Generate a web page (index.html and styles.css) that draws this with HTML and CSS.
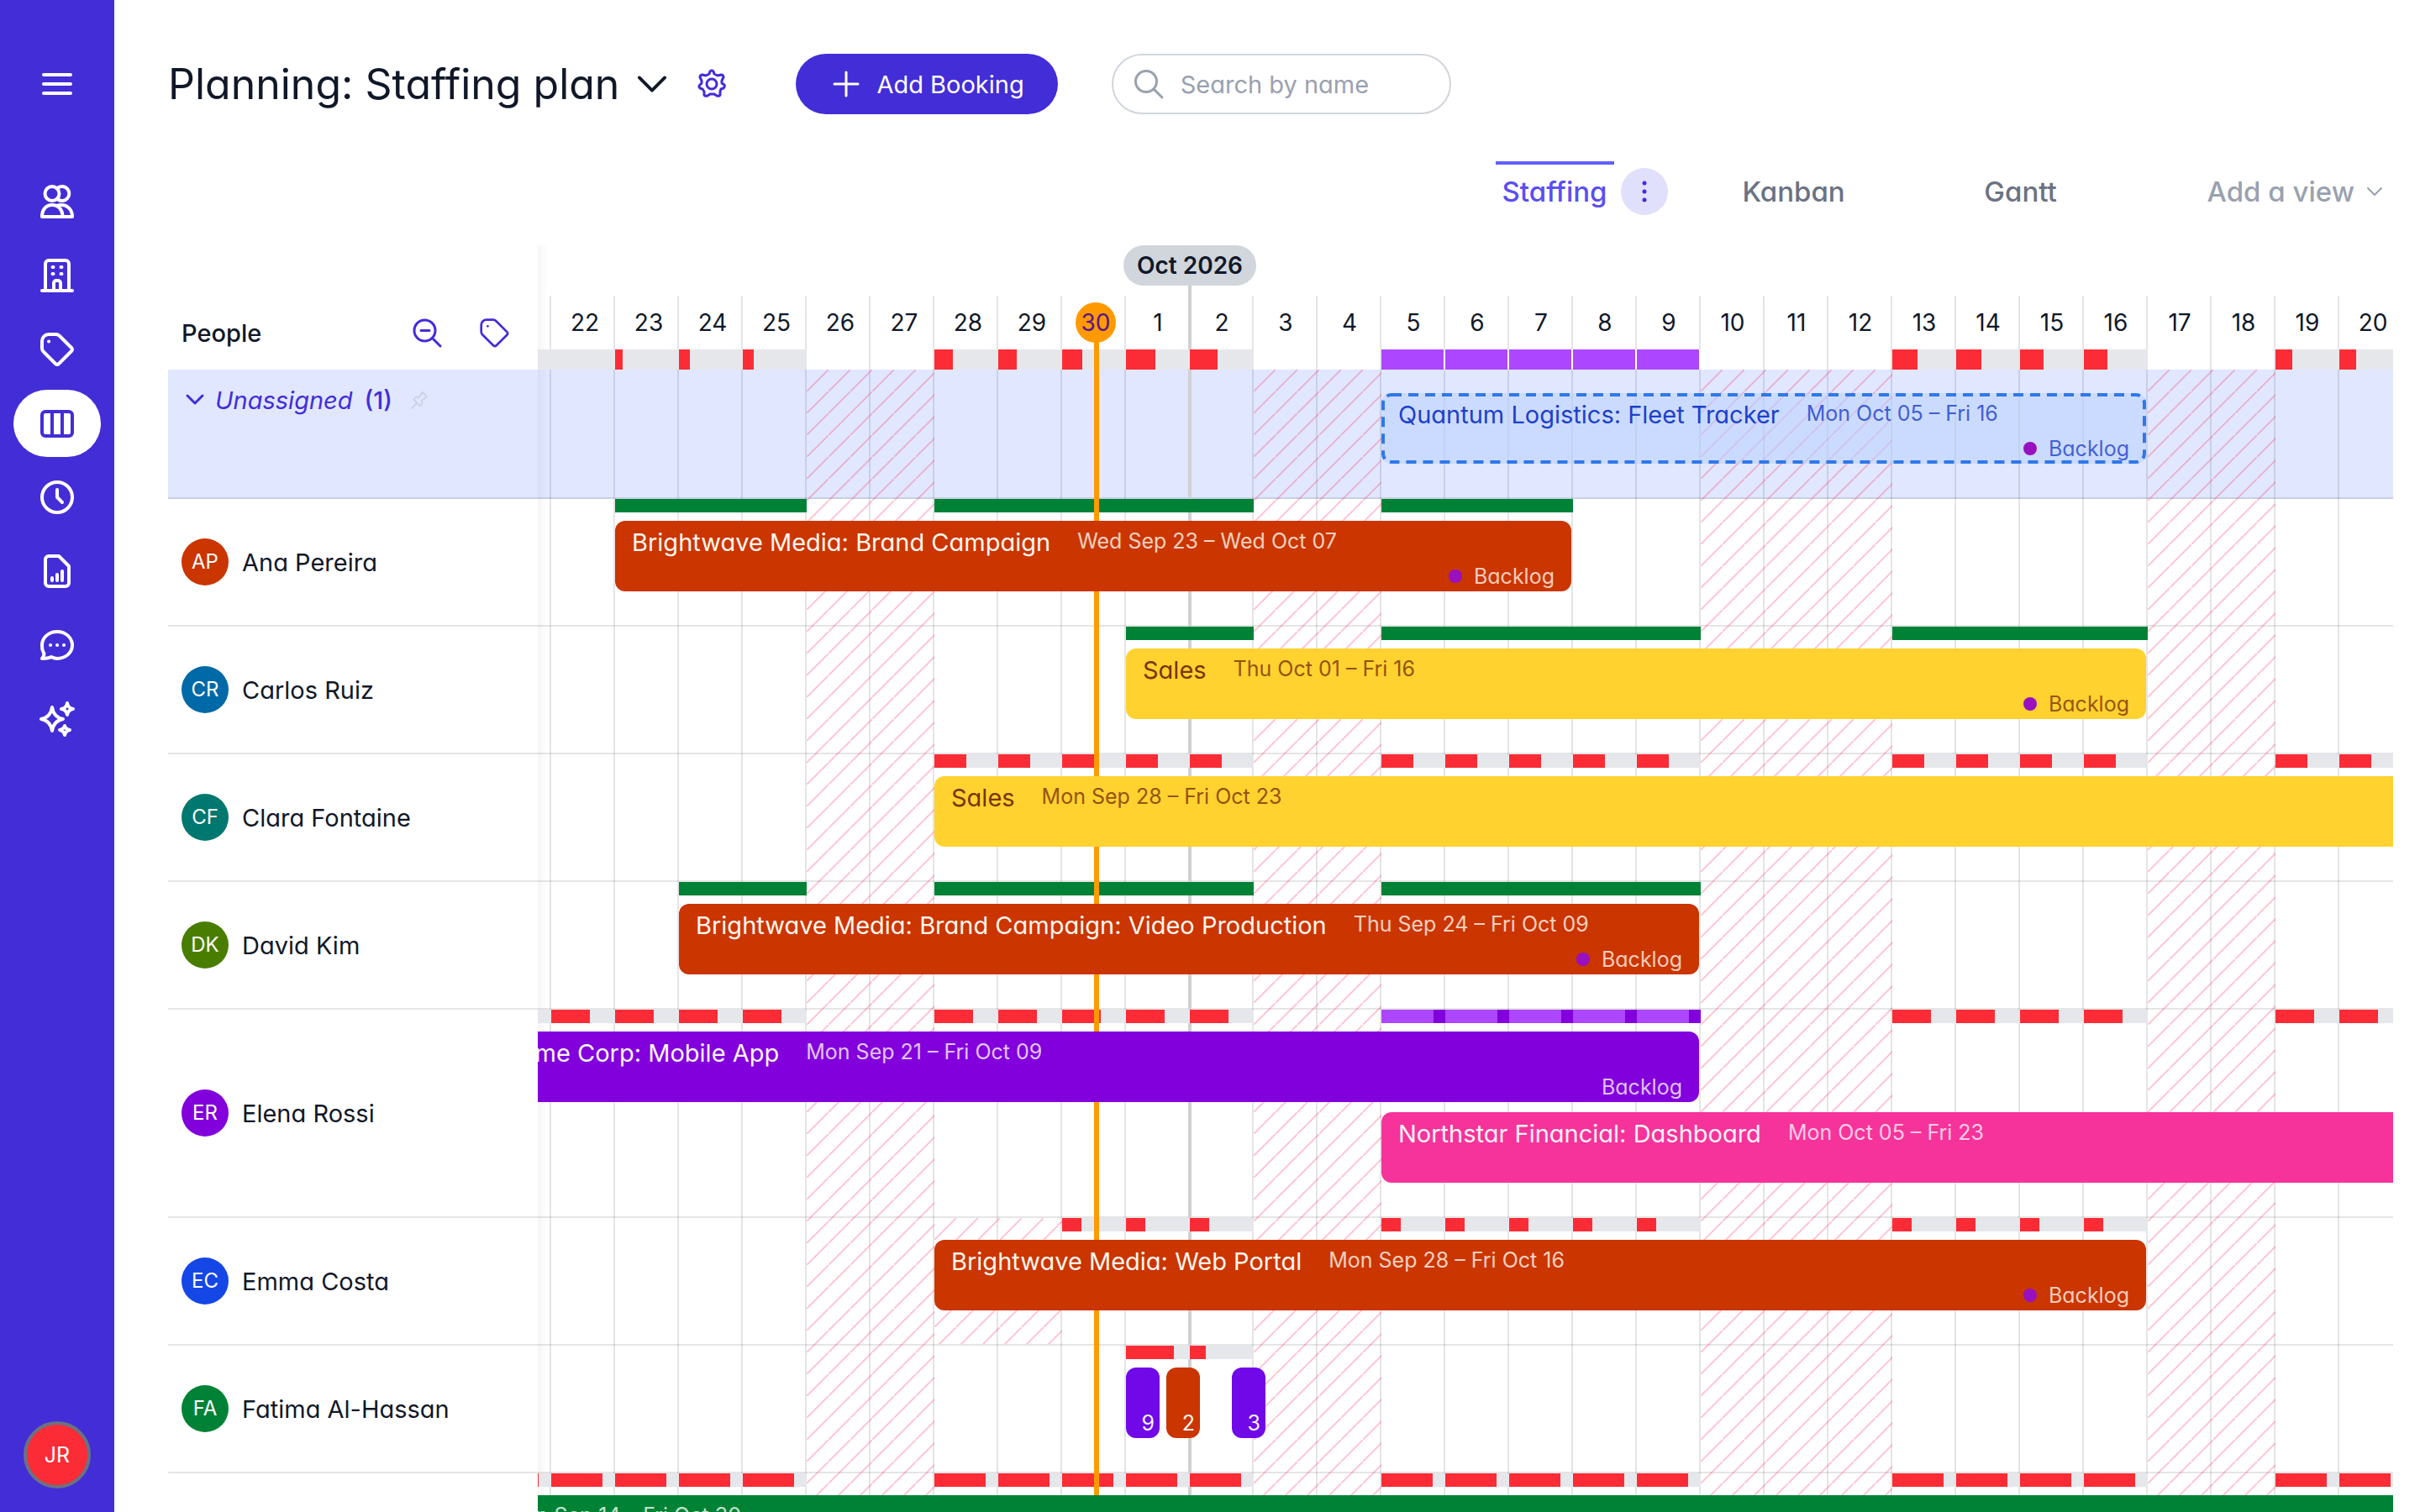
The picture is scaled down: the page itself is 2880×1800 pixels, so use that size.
FILE: index.html
```html
<!DOCTYPE html>
<html lang="en">
<head>
<meta charset="utf-8">
<title>Planning: Staffing plan</title>
<link rel="stylesheet" href="styles.css">
</head>
<body>
<div class="app">
  <nav class="sidebar" aria-label="Main">
    <button class="sidebar__item sidebar__menu" aria-label="Menu"><svg class="icon icon--nav" viewBox="0 0 40 40"><path d="M4 9h32M4 20h32M4 31h32"/></svg></button>
    <a class="sidebar__item" href="#people" aria-label="People"><svg class="icon icon--nav" viewBox="0 0 40 40"><circle cx="14" cy="10.500" r="8.500"/><path d="M21 3.500a8.500 8.500 0 1 1 0 14"/><path d="M2 38c0-9 5-14 12-14s12.500 5 12.500 14z"/><path d="M21 24.500c10-2 17 4 17 13.500H26"/></svg></a>
    <a class="sidebar__item" href="#clients" aria-label="Clients"><svg class="icon icon--nav" viewBox="0 0 40 40"><path d="M2 38h36M6 38V6a4 4 0 0 1 4-4h20a4 4 0 0 1 4 4v32M16 38V29a3 3 0 0 1 3-3h2a3 3 0 0 1 3 3v9"/><path d="M14.500 10h1M24.500 10h1M14.500 18h1M24.500 18h1"/></svg></a>
    <a class="sidebar__item" href="#projects" aria-label="Projects"><svg class="icon icon--nav" viewBox="0 0 40 40"><path d="M2 10a8 8 0 0 1 8-8h9a6 6 0 0 1 4 2l14 14q2 2 0 4L22 37q-2 2-4 0L4 23a6 6 0 0 1-2-4z"/><path d="M10 10.500h.1"/></svg></a>
    <a class="sidebar__item sidebar__item--active" href="#planning" aria-label="Planning" aria-current="page"><svg class="icon icon--nav" viewBox="0 0 40 40"><rect x="2" y="6" width="36" height="29" rx="4"/><path d="M14 6v29M26 6v29"/></svg></a>
    <a class="sidebar__item" href="#time" aria-label="Time"><svg class="icon icon--nav" viewBox="0 0 40 40"><circle cx="20" cy="20" r="18"/><path d="M20 11v9l6 6"/></svg></a>
    <a class="sidebar__item" href="#reports" aria-label="Reports"><svg class="icon icon--nav" viewBox="0 0 40 40"><path d="M6 6a4 4 0 0 1 4-4h12l12 12v20a4 4 0 0 1-4 4H10a4 4 0 0 1-4-4z"/><path d="M14 28v3M20 24v7M26 20v11"/></svg></a>
    <a class="sidebar__item" href="#messages" aria-label="Messages"><svg class="icon icon--nav" viewBox="0 0 40 40"><path d="M20 4c10 0 18 7 18 16s-8 16-18 16c-3 0-5-1-7-2-4 2-7 2-11 2 3-3 3-6 1-9-1-2-1-4-1-7C2 11 10 4 20 4z"/><path d="M12 20h.1M20 20h.1M28 20h.1"/></svg></a>
    <a class="sidebar__item" href="#assistant" aria-label="Assistant"><svg class="icon icon--nav" viewBox="0 0 40 40"><path d="M14 6q2 12 13 14-11 2-13 14-2-12-13-14 11-2 13-14zM32 1q1 6 7 7-6 1-7 7-1-6-7-7 6-1 7-7zM29 28q1 4 6 5-5 1-6 6-1-5-6-6 5-1 6-5z"/></svg></a>
    <button class="sidebar__avatar" aria-label="Account JR">JR</button>
  </nav>

  <main class="main">
    <header class="topbar">
      <h1 class="topbar__title">Planning: Staffing plan</h1>
      <button class="plain topbar__switch" aria-label="Switch plan"><svg class="icon icon--chevron" viewBox="0 0 36 20"><path d="M2 2l16 16L34 2"/></svg></button>
      <button class="plain topbar__settings" aria-label="Settings"><svg class="icon icon--gear" viewBox="0 0 36 36"><circle cx="18" cy="18" r="6"/><path d="M15 6l1-3q2-2 4 0l1 3 4 2 4-1q3 0 3 3l-2 4v3l3 2q1 2-1 4l-3 1-1 3v4q-1 2-4 1l-3-2h-5l-3 2q-3 1-4-1v-4l-2-3-3-1q-2-2 0-4l2-2v-3l-2-4q0-3 3-3l4 1z"/></svg></button>
      <button class="add"><svg class="icon icon--plus" viewBox="0 0 32 32"><path d="M16 2v28M2 16h28"/></svg>Add Booking</button>
      <label class="search"><svg class="icon icon--search" viewBox="0 0 36 36"><circle cx="15" cy="15" r="12.500"/><path d="M24 24l10 10"/></svg><input class="search__input" type="search" placeholder="Search by name" aria-label="Search by name"></label>
    </header>

    <nav class="tabs" aria-label="Views">
      <a class="tabs__item tabs__item--active" href="#staffing">Staffing</a>
      <button class="plain tabs__more" aria-label="View options"><svg class="icon icon--dots" viewBox="0 0 8 28"><circle cx="4" cy="4" r="2.500"/><circle cx="4" cy="14" r="2.500"/><circle cx="4" cy="24" r="2.500"/></svg></button>
      <a class="tabs__item tabs__item--kanban" href="#kanban">Kanban</a>
      <a class="tabs__item tabs__item--gantt" href="#gantt">Gantt</a>
      <button class="plain tabs__add">Add a view <svg class="icon icon--small-chevron" viewBox="0 0 20 12"><path d="M2 2l8 8 8-8"/></svg></button>
    </nav>

    <section class="plan" aria-label="Staffing plan">
      <div class="plan__head">
        <div class="people-head">
          <span class="people-head__label">People</span>
          <button class="plain" aria-label="Zoom out"><svg class="icon icon--tool" viewBox="0 0 36 36"><circle cx="15.500" cy="15.500" r="12.500"/><path d="M25 25l9 9M11 15.500h10"/></svg></button>
          <button class="plain" aria-label="Filter by tag"><svg class="icon icon--tool" viewBox="0 0 40 40"><path d="M3 10a7 7 0 0 1 7-7h9a6 6 0 0 1 4 2l14 14q2 2 0 4L23 37q-2 2-4 0L5 23a6 6 0 0 1-2-4z"/><path d="M11.500 11.500h.1"/></svg></button>
        </div>
        <div class="dates">
          <div class="months days-grid"><span class="months__pill">Oct 2026</span></div>
          <div class="days days-grid">
            <span class="day day--twenties" style="grid-column:9">22</span><span class="day day--twenties">23</span><span class="day day--twenties">24</span><span class="day day--twenties">25</span><span class="day day--twenties">26</span><span class="day day--twenties">27</span><span class="day day--twenties">28</span><span class="day day--twenties">29</span><span class="day day--twenties"><span class="day__dot">30</span></span><span class="day">1</span><span class="day">2</span><span class="day">3</span><span class="day">4</span><span class="day">5</span><span class="day">6</span><span class="day">7</span><span class="day">8</span><span class="day">9</span><span class="day">10</span><span class="day">11</span><span class="day">12</span><span class="day">13</span><span class="day">14</span><span class="day">15</span><span class="day">16</span><span class="day">17</span><span class="day">18</span><span class="day">19</span><span class="day day--twenties">20</span>
          </div>
          <div class="totals days-grid">
            <i class="load load--part" style="grid-column:8/10;--used:0px"></i>
            <i class="load load--part" style="grid-column:10;--used:9px"></i>
            <i class="load load--part" style="grid-column:11/13;--used:13px"></i>
            <i class="load load--part" style="grid-column:15/17;--used:22px"></i>
            <i class="load load--part" style="grid-column:17;--used:24px"></i>
            <i class="load load--part" style="grid-column:18;--used:35px"></i>
            <i class="load load--part" style="grid-column:19;--used:33px"></i>
            <i class="load load--over" style="grid-column:22/27"></i>
            <i class="load load--part" style="grid-column:30/32;--used:30px"></i>
            <i class="load load--part" style="grid-column:32/34;--used:28px"></i>
            <i class="load load--part" style="grid-column:36/38;--used:20px"></i>
          </div>
        </div>
      </div>

      <div class="row row--unassigned">
        <div class="person person--group">
          <button class="plain group"><svg class="icon icon--group" viewBox="0 0 20 12"><path d="M1 1l9 9 9-9"/></svg><em class="group__name">Unassigned</em> <span class="group__count">(1)</span></button>
          <button class="plain" aria-label="Pin group"><svg class="icon icon--pin" viewBox="0 0 24 24"><path d="M1 23l7-7M4 12l8 8c3-2 3-5 2-7l7-5-6-6-5 7c-2-1-5-1-6 3z"/></svg></button>
        </div>
        <div class="track days-grid">
          <button class="booking booking--open" style="grid-column:22/34"><svg class="booking__outline" aria-hidden="true"><rect width="100%" height="100%" rx="12"/></svg><span class="booking__top"><span class="booking__name">Quantum Logistics: Fleet Tracker</span><span class="booking__dates">Mon Oct 05 – Fri 16</span></span><span class="booking__status booking__status--dot">Backlog</span></button>
        </div>
      </div>

      <div class="row">
        <div class="person"><span class="avatar avatar--orange">AP</span><span>Ana Pereira</span></div>
        <div class="track days-grid">
          <i class="load load--full" style="grid-column:10/13"></i>
          <i class="load load--full" style="grid-column:15/20"></i>
          <i class="load load--full" style="grid-column:22/25"></i>
          <button class="booking booking--orange" style="grid-column:10/25"><span class="booking__top"><span class="booking__name">Brightwave Media: Brand Campaign</span><span class="booking__dates">Wed Sep 23 – Wed Oct 07</span></span><span class="booking__status booking__status--dot">Backlog</span></button>
        </div>
      </div>

      <div class="row">
        <div class="person"><span class="avatar avatar--blue">CR</span><span>Carlos Ruiz</span></div>
        <div class="track days-grid">
          <i class="load load--full" style="grid-column:18/20"></i>
          <i class="load load--full" style="grid-column:22/27"></i>
          <i class="load load--full" style="grid-column:30/34"></i>
          <button class="booking booking--yellow" style="grid-column:18/34"><span class="booking__top"><span class="booking__name">Sales</span><span class="booking__dates">Thu Oct 01 – Fri 16</span></span><span class="booking__status booking__status--dot">Backlog</span></button>
        </div>
      </div>

      <div class="row">
        <div class="person"><span class="avatar avatar--teal">CF</span><span>Clara Fontaine</span></div>
        <div class="track days-grid">
          <i class="load load--part" style="grid-column:15/20;--used:38px"></i>
          <i class="load load--part" style="grid-column:22/27;--used:38px"></i>
          <i class="load load--part" style="grid-column:30/34;--used:38px"></i>
          <i class="load load--part" style="grid-column:36/41;--used:38px"></i>
          <button class="booking booking--yellow" style="grid-column:15/41"><span class="booking__top"><span class="booking__name">Sales</span><span class="booking__dates">Mon Sep 28 – Fri Oct 23</span></span></button>
        </div>
      </div>

      <div class="row">
        <div class="person"><span class="avatar avatar--lime">DK</span><span>David Kim</span></div>
        <div class="track days-grid">
          <i class="load load--full" style="grid-column:11/13"></i>
          <i class="load load--full" style="grid-column:15/20"></i>
          <i class="load load--full" style="grid-column:22/27"></i>
          <button class="booking booking--orange" style="grid-column:11/27"><span class="booking__top"><span class="booking__name">Brightwave Media: Brand Campaign: Video Production</span><span class="booking__dates">Thu Sep 24 – Fri Oct 09</span></span><span class="booking__status booking__status--dot">Backlog</span></button>
        </div>
      </div>

      <div class="row">
        <div class="person"><span class="avatar avatar--purple">ER</span><span>Elena Rossi</span></div>
        <div class="track days-grid">
          <i class="load load--part" style="grid-column:8/13;--used:46px"></i>
          <i class="load load--part" style="grid-column:15/20;--used:46px"></i>
          <i class="load load--excess" style="grid-column:22/27;--used:62px"></i>
          <i class="load load--part" style="grid-column:30/34;--used:46px"></i>
          <i class="load load--part" style="grid-column:36/41;--used:46px"></i>
          <button class="booking booking--purple" style="grid-column:8/27"><span class="booking__top"><span class="booking__name">Acme Corp: Mobile App</span><span class="booking__dates">Mon Sep 21 – Fri Oct 09</span></span><span class="booking__status">Backlog</span></button>
          <button class="booking booking--pink booking--second" style="grid-column:22/41"><span class="booking__top"><span class="booking__name">Northstar Financial: Dashboard</span><span class="booking__dates">Mon Oct 05 – Fri 23</span></span></button>
        </div>
      </div>

      <div class="row">
        <div class="person"><span class="avatar avatar--royal">EC</span><span>Emma Costa</span></div>
        <div class="track days-grid">
          <i class="leave" style="grid-column:15/17"></i>
          <i class="load load--part" style="grid-column:17/20;--used:23px"></i>
          <i class="load load--part" style="grid-column:22/27;--used:23px"></i>
          <i class="load load--part" style="grid-column:30/34;--used:23px"></i>
          <button class="booking booking--orange" style="grid-column:15/34"><span class="booking__top"><span class="booking__name">Brightwave Media: Web Portal</span><span class="booking__dates">Mon Sep 28 – Fri Oct 16</span></span><span class="booking__status booking__status--dot">Backlog</span></button>
        </div>
      </div>

      <div class="row">
        <div class="person"><span class="avatar avatar--green">FA</span><span>Fatima Al-Hassan</span></div>
        <div class="track days-grid">
          <i class="load load--part" style="grid-column:18;--used:57px"></i>
          <i class="load load--part" style="grid-column:19;--used:19px"></i>
          <button class="booking booking--short booking--violet" style="grid-column:18;--start:0px">9</button>
          <button class="booking booking--short booking--orange" style="grid-column:18;--start:48px">2</button>
          <button class="booking booking--short booking--violet" style="grid-column:19;--start:50px">3</button>
        </div>
      </div>

      <div class="row">
        <div class="person"></div>
        <div class="track days-grid">
          <i class="load load--part" style="grid-column:8/13;--used:61px"></i>
          <i class="load load--part" style="grid-column:15/20;--used:61px"></i>
          <i class="load load--part" style="grid-column:22/27;--used:61px"></i>
          <i class="load load--part" style="grid-column:30/34;--used:61px"></i>
          <i class="load load--part" style="grid-column:36/41;--used:61px"></i>
          <button class="booking booking--green" style="grid-column:8/41"><span class="booking__top"><span class="booking__dates">Mon Sep 14 – Fri Oct 30</span></span></button>
        </div>
      </div>

      <div class="edge"></div>
      <div class="calendar">
        <div class="calendar__lines days-grid">
          <i class="weekend" style="grid-column:13/15"></i>
          <i class="weekend" style="grid-column:20/22"></i>
          <i class="weekend" style="grid-column:27/30"></i>
          <i class="weekend" style="grid-column:34/36"></i>
        </div>
      </div>
      <div class="calendar calendar--month"><div class="calendar__marks days-grid"><i class="month-line"></i></div></div>
      <div class="calendar calendar--now"><div class="calendar__marks days-grid"><i class="today-line"></i></div></div>
    </section>
  </main>
</div>
</body>
</html>
```
FILE: styles.css
```css
:root {
  --brand: #432dd7;
  --ink: #101828;
  --line: rgba(0, 0, 0, .1);
  --day: 76px;
  --scrolled: 592px;
  --people: 440px;
  --hatch: linear-gradient(135deg, transparent calc(50% - 1px), rgba(255, 32, 86, .24) calc(50% - 1px) calc(50% + 1px), transparent calc(50% + 1px));
}

* { box-sizing: border-box; }

body {
  margin: 0;
  background: #fff;
  color: var(--ink);
  font-family: Inter, "Liberation Sans", sans-serif;
  font-feature-settings: "cv11";
  font-size: 29px;
}

button, input {
  font: inherit;
  font-feature-settings: inherit;
  color: inherit;
}

button { cursor: pointer; }
a { color: inherit; text-decoration: none; }

.plain {
  display: flex;
  align-items: center;
  padding: 0;
  border: 0;
  background: none;
}

.icon {
  display: block;
  flex: none;
  fill: none;
  stroke: currentColor;
  stroke-width: 4px;
  stroke-linecap: round;
  stroke-linejoin: round;
  overflow: visible;
}
.icon--nav { width: 40px; height: 40px; }
.icon--chevron { width: 34px; height: 20px; }
.icon--gear { width: 36px; height: 36px; stroke-width: 3px; }
.icon--plus { width: 32px; height: 32px; stroke-width: 3px; }
.icon--search { width: 36px; height: 36px; stroke-width: 3px; }
.icon--dots { width: 8px; height: 28px; fill: currentColor; stroke: none; }
.icon--small-chevron { width: 20px; height: 12px; stroke-width: 2px; }
.icon--tool { width: 36px; height: 36px; stroke-width: 3px; }
.icon--group { width: 20px; height: 12px; stroke-width: 3px; }
.icon--pin { width: 22px; height: 22px; stroke-width: 2px; }

.app {
  display: flex;
  height: 100vh;
  overflow: hidden;
}

/* Sidebar */
.sidebar {
  display: flex;
  flex: none;
  flex-direction: column;
  align-items: center;
  gap: 8px;
  width: 136px;
  padding: 60px 16px 28px;
  background: var(--brand);
  color: #fff;
}
.sidebar__item {
  display: flex;
  align-items: center;
  justify-content: center;
  width: 104px;
  height: 80px;
  border: 0;
  border-radius: 40px;
  background: none;
}
.sidebar__menu { margin-bottom: 52px; }
.sidebar__item--active { background: #fff; color: var(--brand); }
.sidebar__avatar {
  width: 80px;
  height: 80px;
  margin-top: auto;
  padding: 0;
  border: 4px solid #6a7282;
  border-radius: 50%;
  background: #fb2c36;
  color: #fff;
  font-size: 25px;
}

/* Header */
.main {
  display: flex;
  flex: 1;
  flex-direction: column;
  min-width: 0;
  padding: 64px 32px 0 64px;
}
.topbar {
  display: flex;
  flex: none;
  align-items: center;
  height: 72px;
}
.topbar__title {
  margin: 0;
  font-size: 50px;
  font-weight: 400;
  white-space: nowrap;
}
.topbar__switch { margin-left: 22px; }
.topbar__settings { margin: 0 82px 0 36px; color: var(--brand); }
.add {
  display: flex;
  align-items: center;
  gap: 20px;
  height: 72px;
  padding: 0 40px 0 44px;
  border: 0;
  border-radius: 36px;
  background: var(--brand);
  color: #fff;
}
.search {
  display: flex;
  align-items: center;
  gap: 20px;
  width: 404px;
  height: 72px;
  margin-left: 64px;
  padding: 0 24px;
  border: 2px solid #d1d5dc;
  border-radius: 36px;
  color: #99a1af;
}
.search__input {
  flex: 1;
  min-width: 0;
  padding: 0;
  border: 0;
  outline: 0;
  background: none;
  color: var(--ink);
}
.search__input::placeholder { color: #99a1af; opacity: 1; }

/* View tabs */
.tabs {
  display: flex;
  flex: none;
  justify-content: flex-end;
  height: 64px;
  margin-top: 56px;
  padding-right: 12px;
  color: #6a7282;
  font-size: 33px;
  font-weight: 500;
  line-height: 64px;
  white-space: nowrap;
}
.tabs__item {
  padding: 4px 8px 0;
  text-align: center;
}
.tabs__item--active {
  padding-top: 0;
  border-top: 4px solid #615fff;
  color: #5a4ff0;
}
.tabs__more {
  justify-content: center;
  width: 56px;
  height: 56px;
  margin: 8px 72px 0 8px;
  border-radius: 50%;
  background: #e0dffc;
  color: var(--brand);
}
.tabs__item--kanban { width: 156px; }
.tabs__item--gantt { width: 156px; margin: 0 144px 0 114px; }
.tabs__add { gap: 14px; height: 72px; color: #99a1af; }

/* Plan: every track shares one column per day, shifted by the scroll position */
.plan {
  position: relative;
  flex: none;
  margin-top: 36px;
}
.days-grid {
  display: grid;
  grid-template-columns: repeat(41, var(--day));
  margin-left: calc(var(--scrolled) * -1);
}
.plan__head { display: flex; }
.people-head {
  display: flex;
  flex: none;
  align-items: center;
  gap: 44px;
  width: var(--people);
  padding: 60px 34px 0 16px;
}
.people-head__label {
  margin-right: auto;
  color: var(--ink);
  font-weight: 500;
}
.people-head .plain { color: var(--brand); }
.dates { flex: 1; min-width: 0; overflow: hidden; }
.months { height: 60px; align-items: start; }
.months__pill {
  z-index: 3;
  grid-column: 18 / 20;
  justify-self: center;
  padding: 0 16px;
  border-radius: 24px;
  background: #d1d5dc;
  font-size: 28px;
  font-weight: 600;
  line-height: 48px;
  white-space: nowrap;
}
.days { height: 64px; }
.day {
  font-size: 28px;
  line-height: 64px;
  text-align: center;
}
.day--twenties { padding-left: 4px; }
.day__dot {
  position: relative;
  z-index: 4;
  display: inline-block;
  width: 48px;
  border-radius: 50%;
  background: #fe9a00;
  color: #59168b;
  line-height: 48px;
}
.totals { height: 24px; }
.totals .load { height: 24px; }

.row {
  display: flex;
  border-bottom: 2px solid var(--line);
}
.row--unassigned { background: #e0e7ff; }
.person {
  display: flex;
  flex: none;
  align-items: center;
  gap: 16px;
  width: var(--people);
  padding-left: 16px;
}
.person--group {
  align-items: flex-start;
  gap: 22px;
  padding: 20px 0 0 22px;
  color: var(--brand);
}
.person--group .plain { height: 32px; }
.person--group .icon--pin { color: #ccd2e3; }
.group { gap: 14px; }
.group__count { font-weight: 500; }
.avatar {
  width: 56px;
  border-radius: 50%;
  color: #fff;
  font-size: 24px;
  line-height: 56px;
  text-align: center;
}
.avatar--orange { background: #ca3500; }
.avatar--blue { background: #0069a8; }
.avatar--teal { background: #00786f; }
.avatar--lime { background: #497d00; }
.avatar--purple { background: #8200db; }
.avatar--royal { background: #1447e6; }
.avatar--green { background: #008236; }

/* First grid row holds the load strips, the next ones the bookings */
.plan .row .days-grid {
  grid-template-rows: 14px;
  grid-auto-rows: 84px;
  row-gap: 12px;
  padding-bottom: 40px;
}
.plan .row--unassigned .days-grid { padding-top: 2px; }
.row { overflow: hidden; }
.row .person { position: relative; z-index: 5; background: #fff; }
.row--unassigned .person { background: #e0e7ff; }

.load {
  z-index: 2;
  grid-row: 1;
  height: 16px;
}
.load--full { background: #008236; }
.load--part { background: repeating-linear-gradient(to right, #fb2c36 0 var(--used), #e5e7eb var(--used) var(--day)); }
.load--excess { background: repeating-linear-gradient(to right, #ad46ff 0 var(--used), #8200db var(--used) var(--day)); }
.load--over { background: repeating-linear-gradient(to right, #ad46ff 0 74px, #fff 74px var(--day)); }

.booking {
  z-index: 4;
  display: flex;
  flex-direction: column;
  justify-content: space-between;
  grid-row: 2;
  margin: 0 2px 0 0;
  padding: 8px 20px 0;
  border: 0;
  border-radius: 12px;
  overflow: hidden;
  text-align: left;
  white-space: nowrap;
}
.booking--second { grid-row: 3; }
.booking__top {
  display: flex;
  gap: 32px;
  line-height: 36px;
}
.booking__dates { font-size: 25px; line-height: 32px; opacity: .8; }
.booking__status {
  display: flex;
  align-items: center;
  align-self: flex-end;
  gap: 14px;
  color: color-mix(in srgb, currentColor 80%, transparent);
  font-size: 25px;
  line-height: 36px;
}
.booking__status--dot::before {
  width: 16px;
  height: 16px;
  border-radius: 50%;
  background: #9810c0;
  content: "";
}
.booking--orange { background: #ca3500; color: #fff7ed; }
.booking--yellow { background: #ffd230; color: #7b3306; }
.booking--purple { background: #8200db; color: #faf5ff; }
.booking--violet { background: #7008e7; color: #f5f3ff; }
.booking--pink { background: #f6339a; color: #fdf2f8; }
.booking--green { background: #008236; color: #f0fdf4; }
.booking--open {
  position: relative;
  background: rgba(186, 210, 255, .55);
  color: #1c40cb;
}
.booking__outline {
  position: absolute;
  inset: 0;
  width: 100%;
  height: 100%;
  fill: none;
  stroke: #2f78ea;
  stroke-width: 8px;
  stroke-dasharray: 12 8;
}
.booking--short {
  justify-content: flex-end;
  width: 40px;
  margin-left: var(--start);
  padding: 0 6px 2px;
  font-size: 25px;
  line-height: 32px;
  text-align: right;
}

.leave {
  grid-row: 1 / 3;
  margin-bottom: -40px;
  background: var(--hatch) 0 0 / 26px 26px;
}

/* Day lines, weekends and markers lying across all rows */
.calendar {
  position: absolute;
  inset: 60px 0 0 var(--people);
  overflow: hidden;
  pointer-events: none;
}
.calendar__lines, .calendar__marks { height: 100%; }
.calendar__lines { background: repeating-linear-gradient(to right, transparent 0 74px, var(--line) 74px var(--day)); }
.weekend {
  margin-top: 88px;
  background: var(--hatch) 0 0 / 26px 26px;
}
.calendar--month { top: 48px; z-index: 1; }
.month-line {
  grid-column: 19;
  width: 4px;
  margin-left: -2px;
  background: #d1d1d4;
}
.calendar--now { top: 108px; z-index: 3; }
.today-line {
  grid-column: 17;
  width: 6px;
  margin-left: 38px;
  background: #fe9a00;
}
.edge {
  position: absolute;
  inset: 0 auto 0 var(--people);
  width: 12px;
  background: linear-gradient(to right, rgba(0, 0, 0, .04), transparent);
}
```
